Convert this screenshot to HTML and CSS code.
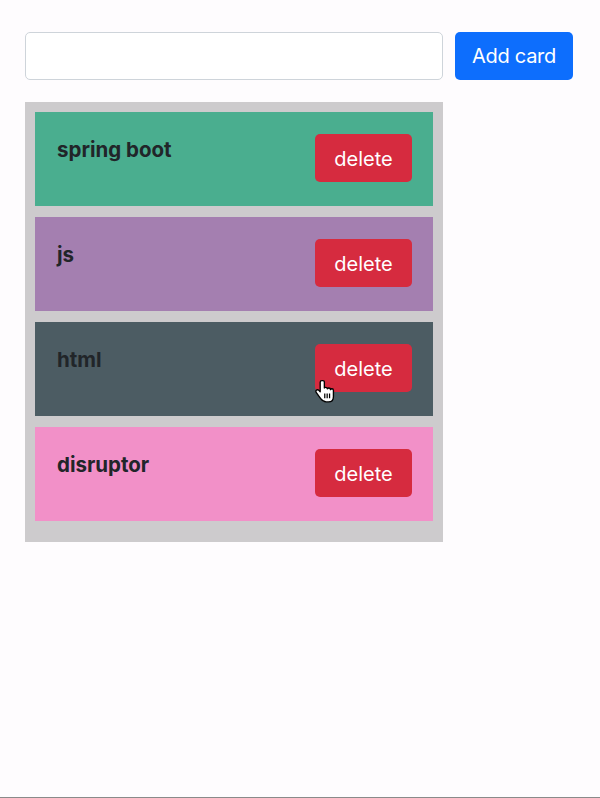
FILE: index.html
```html
<!DOCTYPE html>
<html lang="en">
<head>
<meta charset="utf-8">
<title>Cards</title>
<link rel="stylesheet" href="styles.css">
</head>
<body>
<div class="page">
  <div class="add-row">
    <input class="card-input" type="text">
    <button class="btn btn-primary">Add card</button>
  </div>
  <div class="board">
    <div class="card card-green">
      <div class="card-title">spring boot</div>
      <button class="btn btn-danger">delete</button>
    </div>
    <div class="card card-purple">
      <div class="card-title">js</div>
      <button class="btn btn-danger">delete</button>
    </div>
    <div class="card card-slate">
      <div class="card-title">html</div>
      <div class="btn-wrap">
        <button class="btn btn-danger">delete</button>
        <svg class="cursor" width="21" height="25" viewBox="0 0 20 24">
          <path d="M6.5 1.5c-1 0-1.6.7-1.6 1.6v9.2l-1.3-1.4c-.7-.7-1.8-.8-2.4-.1-.6.6-.5 1.5 0 2.2l4 5.6c1.2 1.6 2.6 3.4 5.4 3.4h2.2c3 0 4.8-2.2 4.8-5V11c0-.9-.7-1.6-1.5-1.6-.6 0-1.1.3-1.3.8 0-.9-.7-1.6-1.6-1.6-.6 0-1.1.3-1.4.8-.1-.8-.8-1.4-1.6-1.4-.5 0-1 .2-1.300.6V3.1c0-.9-.6-1.6-1.4-1.6z" fill="#fff" stroke="#000" stroke-width="1.3" stroke-linejoin="round"/>
          <path d="M9.3 14v4.5M11.6 14v4.5M13.9 14v4.5" stroke="#000" stroke-width="1.2"/>
        </svg>
      </div>
    </div>
    <div class="card card-pink">
      <div class="card-title">disruptor</div>
      <button class="btn btn-danger">delete</button>
    </div>
  </div>
</div>
</body>
</html>
```

FILE: styles.css
```css
* { box-sizing: border-box; }
html, body { margin: 0; padding: 0; background: #fefcfe; }
body {
  font-family: Inter, "Noto Sans", "Liberation Sans", sans-serif;
  color: #212529;
}
.page {
  min-height: 798px;
  padding: 32px 27px 0 25px;
  border-bottom: 1px solid #8a8a8a;
}
.add-row {
  display: flex;
  gap: 12px;
}
.card-input {
  flex: 0 0 418px;
  height: 48px;
  border: 1px solid #ced4da;
  border-radius: 5px;
  background: #fff;
  font: inherit;
  font-size: 20px;
  padding: 8px 16px;
}
.btn {
  font-family: inherit;
  font-size: 20px;
  line-height: 30px;
  padding: 8px 16px;
  border: 1px solid transparent;
  border-radius: 5px;
  color: #fff;
  cursor: pointer;
  white-space: nowrap;
}
.btn-primary {
  background: #0d6efd;
  flex: 0 0 118px;
  height: 48px;
  padding: 0;
  letter-spacing: -0.3px;
}
.btn-danger {
  background: #d62b3f;
  width: 97px;
  height: 48px;
  padding: 2px 0 0;
}
.board {
  width: 418px;
  margin-top: 22px;
  background: #cdcbcd;
  padding: 10px 10px 10px;
}
.card {
  display: flex;
  justify-content: space-between;
  align-items: flex-start;
  height: 94px;
  padding: 22px 21px 0 22px;
  margin-bottom: 11px;
}
.card-title {
  font-size: 20.5px;
  font-weight: 700;
  line-height: 24px;
  padding-top: 4px;
}
.card-green { background: #4aae8f; }
.card-purple { background: #a47fb0; }
.card-slate { background: #4c5c63; }
.card-pink { background: #f290c8; }
.btn-wrap { position: relative; }
.cursor {
  position: absolute;
  left: 0;
  top: 35px;
}
```
